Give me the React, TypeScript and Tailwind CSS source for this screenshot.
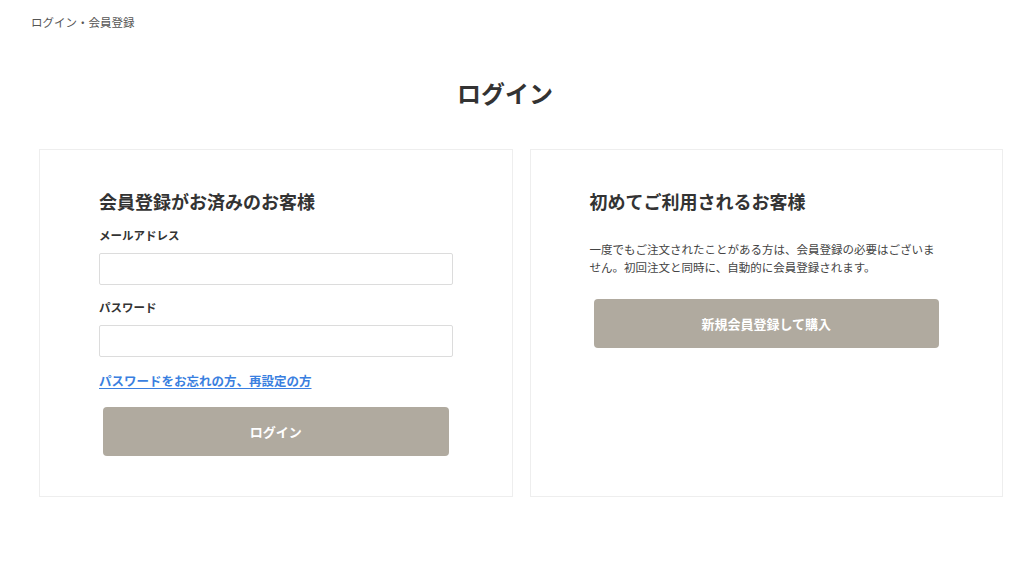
import React from "react";

export default function App() {
  return (
    <div
      className="min-h-[572px] w-full bg-white text-[#333]"
      style={{ fontFamily: '"Noto Sans CJK JP", "Noto Sans", sans-serif' }}
    >
      <div className="px-[31px] pt-[13px] text-[11.5px] leading-[18px] text-[#555]">
        ログイン・会員登録
      </div>
      <h1 className="mt-[46px] pr-[14px] text-center text-[24px] font-bold leading-[32px] text-[#333]">
        ログイン
      </h1>
      <div className="ml-[39px] mr-[21px] mt-[40px] flex gap-[17px]">
        <div className="flex-1 border border-[#eeeeee] px-[59px] pb-[40px] pt-[39px]">
          <h2 className="text-[18px] font-bold leading-[24px] text-[#333]">
            会員登録がお済みのお客様
          </h2>
          <div className="mt-[13px] text-[11.5px] font-bold leading-[18px] text-[#333]">
            メールアドレス
          </div>
          <div className="mt-[9px] h-[32px] rounded-[2px] border border-[#dcdcdc] bg-white" />
          <div className="mt-[13px] text-[11.5px] font-bold leading-[18px] text-[#333]">
            パスワード
          </div>
          <div className="mt-[9px] h-[32px] rounded-[2px] border border-[#dcdcdc] bg-white" />
          <div className="mt-[12px] leading-[20px]">
            <a className="text-[12.5px] font-bold text-[#3a7fe0] underline underline-offset-2">
              パスワードをお忘れの方、再設定の方
            </a>
          </div>
          <div className="mx-[4px] mt-[16px] flex h-[49px] items-center justify-center rounded-[4px] bg-[#b0aa9f] text-[13px] font-bold text-white">
            ログイン
          </div>
        </div>
        <div className="flex-1 border border-[#eeeeee] px-[59px] pb-[40px] pt-[39px]">
          <h2 className="text-[18px] font-bold leading-[24px] text-[#333]">
            初めてご利用されるお客様
          </h2>
          <p className="mt-[27px] text-[11.5px] leading-[18px] text-[#444]">
            一度でもご注文されたことがある方は、会員登録の必要はございません。初回注文と同時に、自動的に会員登録されます。
          </p>
          <div className="mx-[4px] mt-[23px] flex h-[49px] items-center justify-center rounded-[4px] bg-[#b0aa9f] text-[13px] font-bold text-white">
            新規会員登録して購入
          </div>
        </div>
      </div>
    </div>
  );
}
